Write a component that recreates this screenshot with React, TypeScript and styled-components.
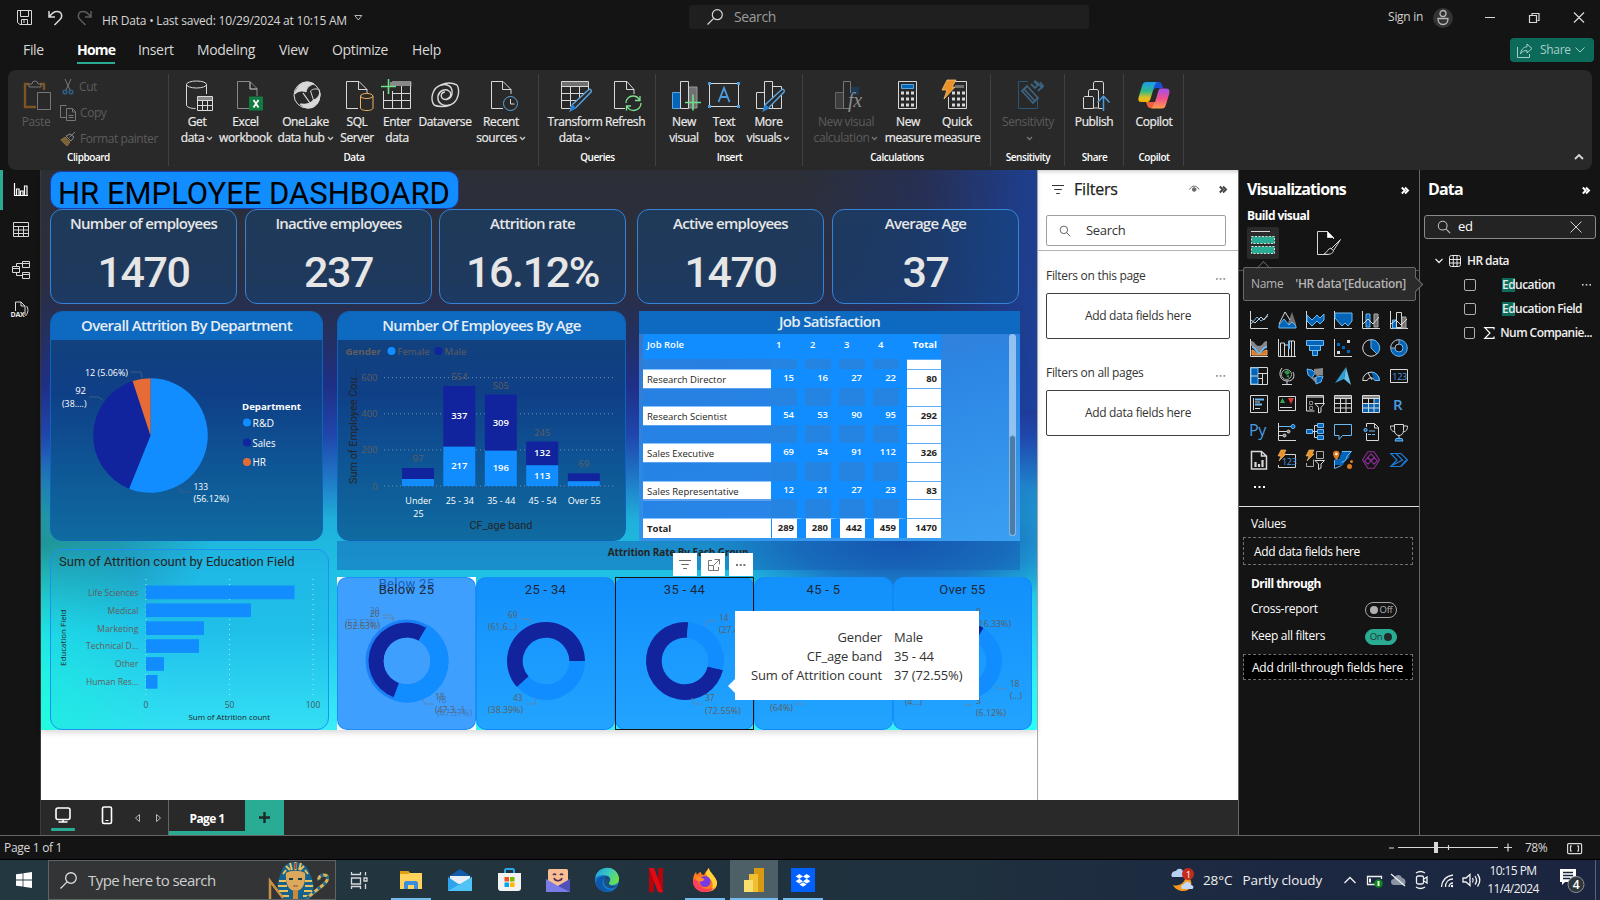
import React from 'react';
import styled, { createGlobalStyle, css } from 'styled-components';

const UI = `"Open Sans", "Noto Sans", sans-serif`;
const DIN = `Roboto, "Open Sans", sans-serif`;
const BLUE = '#118dff';
const NAVY = '#12239e';
const TEAL = '#2aab94';

const Global = createGlobalStyle`
  * { box-sizing: border-box; }
  body { margin: 0; background: #141414; font-family: ${UI}; }
  svg { display: block; overflow: visible; flex: none; }
`;

const Window = styled.div`
  width: 1600px;
  height: 900px;
  overflow: hidden;
  display: flex;
  flex-direction: column;
  background: #141414;
  color: #fff;
  font-size: 12px;
  letter-spacing: -0.3px;
  white-space: nowrap;
  line-height: 1.2;
`;

/* ---------- title bar ---------- */
const TitleBar = styled.header`
  height: 35px;
  display: grid;
  grid-template-columns: 689px 400px 1fr;
`;
const QuickBar = styled.div`
  display: flex;
  align-items: center;
  padding-left: 17px;
  color: #d6d6d6;
  letter-spacing: -0.21px;
`;
const FileName = styled.span`
  padding-top: 8px;
  margin: 0 7px 0 10px;
`;
const TopSearch = styled.div`
  height: 24px;
  margin-top: 5px;
  border-radius: 3px;
  background: #1f1f1f;
  display: flex;
  align-items: center;
  gap: 11px;
  padding-left: 18px;
  color: #9c9c9c;
  font-size: 14px;
  letter-spacing: -0.4px;
`;
const WindowControls = styled.div`
  display: flex;
  align-items: center;
  justify-content: flex-end;
  padding-right: 10px;
  color: #d0d0d0;
`;
const Avatar = styled.div`
  width: 20px;
  height: 20px;
  border-radius: 50%;
  background: #333;
  margin: 0 22px 0 10px;
`;

/* ---------- menu ---------- */
const Menu = styled.nav`
  height: 35px;
  display: flex;
  padding: 3px 6px 0 23px;
  align-items: flex-start;
`;
const MenuItem = styled.span<{ $w: number; $active?: boolean }>`
  width: ${p => p.$w}px;
  font-size: 14px;
  line-height: 24px;
  letter-spacing: ${p => (p.$active ? '-0.8px' : '-0.35px')};
  font-weight: ${p => (p.$active ? 700 : 400)};
  color: ${p => (p.$active ? '#fff' : '#d8d8d8')};
`;
const Underlined = styled.span`
  display: inline-block;
  width: 38px;
  height: 26px;
  border-bottom: 2px solid ${TEAL};
`;
const ShareButton = styled.div`
  margin-left: auto;
  width: 84px;
  height: 24px;
  border-radius: 4px;
  background: #0c6a5b;
  color: #a9cdc6;
  display: flex;
  align-items: center;
  gap: 7px;
  padding-left: 7px;
  & > span { width: 28px; }
`;

/* ---------- ribbon ---------- */
const Ribbon = styled.section`
  height: 100px;
  margin: 0 8px;
  border-radius: 8px;
  background: #292929;
  display: flex;
`;
const Group = styled.div<{ $w: number; $pad?: number }>`
  position: relative;
  width: ${p => p.$w}px;
  padding-left: ${p => p.$pad ?? 8}px;
  flex: none;
  display: flex;
  &::after {
    content: '';
    position: absolute;
    right: 0;
    top: 4px;
    height: 92px;
    width: 1px;
    background: #404040;
  }
`;
const GroupLabel = styled.span`
  position: absolute;
  left: 0;
  right: 0;
  bottom: 7px;
  text-align: center;
  font-size: 10px;
  font-weight: 600;
  letter-spacing: -0.45px;
`;
const ToolBox = styled.div<{ $w: number; $off?: boolean }>`
  width: ${p => p.$w}px;
  padding-top: 9px;
  display: flex;
  flex-direction: column;
  align-items: center;
  color: ${p => (p.$off ? '#5c5c5c' : '#ececec')};
  line-height: 16px;
  letter-spacing: -0.38px;
  -webkit-text-stroke: ${p => (p.$off ? '0' : '0.2px')};
  svg { margin-bottom: 3px; -webkit-text-stroke: 0; }
  svg.inl { display: inline-block; margin: 0 0 1px 2px; }
`;
const ClipList = styled.div`
  padding: 4px 0 0 2px;
  display: flex;
  flex-direction: column;
  color: #5c5c5c;
  letter-spacing: -0.42px;
`;
const ClipRow = styled.div`
  height: 26px;
  display: flex;
  align-items: center;
  gap: 3px;
`;
const CollapseSlot = styled.div`
  margin: auto 8px 10px auto;
`;

/* ---------- body ---------- */
const Body = styled.div`
  height: 665px;
  display: flex;
`;
const NavRail = styled.nav`
  width: 41px;
  border-right: 1px solid #3c3c3c;
  display: flex;
  flex-direction: column;
`;
const NavItem = styled.div<{ $active?: boolean }>`
  height: 40px;
  border-left: 3px solid ${p => (p.$active ? TEAL : 'transparent')};
  display: flex;
  align-items: center;
  padding-left: 9px;
`;
const Center = styled.main`
  width: 1198px;
  border-right: 1px solid #666;
  display: flex;
  flex-direction: column;
`;
const Stage = styled.div`
  height: 630px;
  display: flex;
  background: #fff;
`;
const Report = styled.div`
  width: 996px;
  height: 560px;
  padding: 1px 0 0 9px;
  box-shadow: 0 3px 6px rgba(0, 0, 0, 0.14);
  display: flex;
  flex-direction: column;
  letter-spacing: 0;
  background:
    radial-gradient(ellipse 190px 75px at 860px 372px, rgba(24, 70, 172, 0.95), rgba(24, 74, 176, 0.6) 55%, rgba(24, 80, 180, 0) 100%),
    radial-gradient(ellipse 130px 230px at 0 560px, rgba(28, 255, 220, 0.85), rgba(28, 240, 220, 0) 100%),
    radial-gradient(ellipse 170px 90px at 0 375px, rgba(32, 122, 130, 0.9), rgba(32, 130, 140, 0) 100%),
    radial-gradient(ellipse 160px 150px at 100% 100%, #28fff8, rgba(40, 245, 250, 0) 100%),
    linear-gradient(270deg, rgba(27, 66, 160, 0.85), rgba(32, 48, 120, 0.45) 110px, rgba(30, 40, 100, 0) 240px) 0 0 / 100% 240px no-repeat,
    linear-gradient(180deg, #2c2f36 0, #2b2e42 110px, #24305c 160px, #1f2f86 215px, #1f46ac 265px, #1f74c4 305px, #1fb0da 350px, #1fc0e4 400px, #20c8ea 460px, #38eef6 560px);
`;
const ReportTitle = styled.h1`
  margin: 0;
  width: 409px;
  height: 38px;
  padding-left: 7px;
  border: 1px solid #1d3fae;
  border-radius: 11px;
  background: ${BLUE};
  color: #000;
  font: 400 31px/43px ${DIN};
  letter-spacing: 0;
`;
const Kpis = styled.div`
  height: 95px;
  display: grid;
  grid-template-columns: repeat(5, 187px);
  column-gap: 8px;
  & > :nth-child(n + 3) { transform: translateX(-1px); }
  & > :nth-child(n + 4) { transform: translateX(2px); }
`;
const Kpi = styled.div`
  border: 1px solid #3583d6;
  border-radius: 12px;
  background: rgba(14, 74, 130, 0.42);
  color: #e6e6e6;
  text-align: center;
`;
const KpiName = styled.div`
  margin-top: 2px;
  font-size: 15px;
  line-height: 22px;
  font-weight: 600;
  letter-spacing: -0.72px;
`;
const KpiValue = styled.div`
  margin-top: 15px;
  font: 500 43px/46px ${DIN};
  letter-spacing: -1.4px;
`;
const Lower = styled.div`
  margin-top: 7px;
  display: flex;
`;
const LeftCol = styled.div`
  width: 287px;
`;
const RightCol = styled.div`
  width: 700px;
`;
const TopRow = styled.div`
  display: flex;
  gap: 13px;
`;
const Card = styled.div<{ $w: number }>`
  width: ${p => p.$w}px;
  height: 230px;
  flex: none;
  border: 1px solid #1064b8;
  border-radius: 12px;
  overflow: hidden;
  background: linear-gradient(180deg, #14427a 0, #0f3f86 35%, #0e5494 65%, #0f6ba0 100%);
`;
const CardHead = styled.div<{ $h?: number }>`
  height: ${p => p.$h ?? 28}px;
  line-height: ${p => (p.$h ? p.$h - 3 : 26)}px;
  background: #0e6ac0;
  color: #e4ecf4;
  text-align: center;
  font-size: 15px;
  font-weight: 600;
  letter-spacing: -0.66px;
`;
const EduCard = styled.div`
  width: 279px;
  height: 181px;
  margin-top: 8px;
  border: 1px solid #1e90f4;
  border-radius: 12px;
  background: rgba(30, 150, 235, 0.16);
`;
const EduTitle = styled.div`
  padding: 2px 0 0 8px;
  height: 22px;
  color: #252423;
  font: 400 13px/20px ${DIN};
  letter-spacing: 0;
`;

/* ---------- matrix ---------- */
const MatrixPanel = styled.div`
  width: 381px;
  height: 230px;
  background: linear-gradient(165deg, #3a76c4 0, #2c86e4 45%, #3aa0f2 100%);
`;
const MatrixBody = styled.div`
  display: flex;
  justify-content: space-between;
  padding: 0 4px 0 4px;
`;
const Matrix = styled.div`
  width: 298px;
  color: #fff;
  font-size: 9.5px;
`;
const MRow = styled.div<{ $h: number; $blank?: boolean; $head?: boolean }>`
  height: ${p => p.$h}px;
  display: grid;
  grid-template-columns: 128px repeat(4, 34px) 1fr;
  background: ${p => (p.$head ? BLUE : 'transparent')};
  line-height: ${p => (p.$head ? 21 : p.$h)}px;
  font-weight: ${p => (p.$head ? 600 : 400)};
`;
const RoleCell = styled.div<{ $kind: 'data' | 'blank' | 'head' }>`
  padding-left: 4px;
  ${p => p.$kind === 'data' && css`
    background: #fff;
    color: #252423;
    border-top: 1px solid #8cc6ff;
    line-height: 19px;
  `}
  ${p => p.$kind === 'blank' && css`background: rgba(36, 130, 230, 0.75);`}
`;
const NumCell = styled.div<{ $kind: 'data' | 'blank' | 'head' | 'total' }>`
  border-right: 8px solid ${BLUE};
  background: ${BLUE};
  text-align: right;
  padding-right: 3px;
  font-weight: 600;
  ${p => p.$kind === 'head' && css`text-align: left; padding-left: 5px;`}
  ${p => p.$kind === 'blank' && css`background: #2583e2;`}
  ${p => p.$kind === 'total' && css`background: #fff; color: #252423; font-weight: 700; border-left: 1px solid ${BLUE}; border-top: 1px solid #8cc6ff;`}
`;
const SumCell = styled.div<{ $head?: boolean }>`
  text-align: right;
  padding-right: 4px;
  font-weight: 700;
  ${p => !p.$head && css`background: #fff; color: #252423; border-top: 1px solid #5cabf8; line-height: 18px;`}
`;
const Scroll = styled.div`
  width: 7px;
  height: 202px;
  border-radius: 4px;
  background: #93c2f1;
  display: flex;
  align-items: flex-end;
`;
const ScrollThumb = styled.div`
  width: 7px;
  height: 101px;
  border-radius: 4px;
  border: 1px solid #8bb5dc;
  background: #4a7ea8;
`;

/* ---------- attrition by group ---------- */
const Banner = styled.div`
  width: 683px;
  height: 29px;
  background: rgba(20, 96, 180, 0.5);
  color: #252423;
  text-align: center;
  font-size: 10px;
  line-height: 23px;
  font-weight: 700;
  padding-right: 1px;
  letter-spacing: -0.1px;
`;
const Donuts = styled.div`
  margin-top: 7px;
  height: 153px;
  display: flex;
`;
const DonutFrame = styled.div<{ $selected?: boolean; $backed?: boolean }>`
  position: relative;
  width: 139px;
  height: 153px;
  ${p => p.$backed && css`background: #fff;`}
  ${p => p.$selected && css`outline: 1px solid #151515; outline-offset: -1px; z-index: 1;`}
`;
const DonutCard = styled.div<{ $fill?: string }>`
  width: 139px;
  height: 153px;
  border: 1px solid rgba(17, 132, 250, 0.7);
  border-radius: 10px;
  background: ${p => p.$fill ?? 'linear-gradient(180deg, #1290fc, #22a4ff)'};
`;
const DonutTitle = styled.div`
  position: relative;
  color: #1d2a3a;
  text-align: center;
  font: 400 13px/23px ${DIN};
  letter-spacing: 0.3px;
`;
const GhostTitle = styled(DonutTitle)`
  position: absolute;
  left: 0;
  right: 0;
  top: -5px;
  color: #1a60b4;
`;
const VisualTools = styled.div`
  position: absolute;
  left: 58px;
  top: -24px;
  display: flex;
  gap: 4px;
`;
const VisualTool = styled.div`
  width: 24px;
  height: 23px;
  background: #fff;
  display: grid;
  place-items: center;
`;
const Tip = styled.div`
  position: absolute;
  left: 120px;
  top: 34px;
  width: 244px;
  height: 89px;
  padding: 17px 0 0 10px;
  background: #fff;
  color: #333;
  font-size: 13px;
  line-height: 19px;
  letter-spacing: -0.13px;
  display: grid;
  grid-template-columns: 137px 1fr;
  grid-auto-rows: 19px;
  column-gap: 12px;
  & > :nth-child(odd) { text-align: right; }
  &::before {
    content: '';
    position: absolute;
    left: -7px;
    top: 68px;
    border: 7px solid transparent;
    border-left: 0;
    border-right-color: #fff;
  }
`;

/* ---------- page tabs ---------- */
const TabBar = styled.div`
  height: 35px;
  background: #292929;
  display: flex;
`;
const DeviceBar = styled.div`
  width: 128px;
  border-right: 1px solid #666;
  display: flex;
  padding-left: 10px;
`;
const PageTab = styled.div`
  width: 76px;
  border-bottom: 4px solid ${TEAL};
  text-align: center;
  line-height: 37px;
  font-weight: 700;
  letter-spacing: -0.6px;
`;
const AddTab = styled.div`
  width: 39px;
  background: ${TEAL};
  display: grid;
  place-items: center;
`;

/* ---------- filters pane ---------- */
const Filters = styled.aside`
  width: 201px;
  border-left: 1px solid #a6a6a6;
  color: #333;
  padding-left: 8px;
  height: 630px;
  box-shadow: inset 0 4px 4px -3px rgba(0, 0, 0, 0.25);
`;
const FiltersHead = styled.div`
  height: 45px;
  display: flex;
  align-items: center;
  padding: 0 11px 6px 6px;
  font-size: 16px;
  letter-spacing: -0.2px;
  color: #252423;
  -webkit-text-stroke: 0.25px;
  & > span { margin: 0 auto 0 10px; }
`;
const FilterSearch = styled.div`
  width: 180px;
  height: 31px;
  border: 1px solid #a0a0a0;
  border-radius: 2px;
  display: flex;
  align-items: center;
  gap: 15px;
  padding-left: 12px;
  font-size: 13px;
`;
const Rule = styled.div`
  height: 1px;
  margin: 4px 0 0 -8px;
  background: #b4b4b4;
`;
const FilterLabel = styled.div`
  height: 16px;
  margin-top: 17px;
  display: flex;
  justify-content: space-between;
  padding-right: 12px;
  align-items: center;
  & > svg { margin-top: 5px; }
`;
const DropBox = styled.div`
  width: 184px;
  height: 46px;
  margin: 9px 0 26px;
  border: 1px solid #404040;
  border-radius: 2px;
  display: grid;
  place-items: center;
`;

/* ---------- visualizations pane ---------- */
const Viz = styled.aside`
  width: 181px;
  border-right: 1px solid #666;
  position: relative;
`;
const PaneHead = styled.div<{ $l: number; $r: number }>`
  height: 38px;
  display: flex;
  align-items: center;
  justify-content: space-between;
  padding: 2px ${p => p.$r}px 0 ${p => p.$l}px;
  font-size: 16px;
  font-weight: 700;
  letter-spacing: -0.85px;
`;
const Strong = styled.div`
  font-weight: 700;
  letter-spacing: -0.58px;
  padding-left: 8px;
  height: 19px;
  line-height: 16px;
`;
const BuildTabs = styled.div`
  display: flex;
  gap: 33px;
  padding-left: 8px;
  height: 44px;
  border-bottom: 1px solid #555;
`;
const BuildTab = styled.div<{ $on?: boolean }>`
  width: 32px;
  height: 32px;
  border-radius: 2px;
  background: ${p => (p.$on ? '#2a2a2a' : 'transparent')};
  display: grid;
  place-items: center;
`;
const VizGrid = styled.div`
  padding: 40px 0 0 11px;
  display: grid;
  grid-template-columns: repeat(6, 28px);
  grid-auto-rows: 28px;
  height: 235px;
`;
const NameTip = styled.div`
  position: absolute;
  left: 4px;
  top: 97px;
  width: 173px;
  height: 34px;
  border: 1px solid #6a6a6a;
  border-radius: 2px;
  background: #2b2b2b;
  color: #b4b4b4;
  display: flex;
  align-items: center;
  gap: 12px;
  padding: 1px 0 0 7px;
  z-index: 2;
  & > b { font-weight: 600; letter-spacing: -0.34px; }
  &::before,
  &::after {
    content: '';
    position: absolute;
    width: 10px;
    height: 10px;
    transform: rotate(45deg);
  }
  &::before {
    left: 14px;
    top: -5px;
    border-top: 1px solid #6a6a6a;
    border-left: 1px solid #6a6a6a;
    clip-path: polygon(0 0, 100% 0, 0 100%);
  }
  &::after {
    right: -6px;
    top: 11px;
    border-top: 1px solid #6a6a6a;
    border-right: 1px solid #6a6a6a;
    background: #2b2b2b;
  }
`;
const Wells = styled.div`
  border-top: 1px solid #e0e0e0;
  padding: 9px 5px 0 4px;
`;
const WellLabel = styled.div<{ $b?: boolean }>`
  padding: 0 0 ${p => (p.$b ? 4 : 0)}px 8px;
  line-height: 16px;
  font-weight: ${p => (p.$b ? 700 : 400)};
  letter-spacing: ${p => (p.$b ? '-0.55px' : '-0.3px')};
`;
const Well = styled.div<{ $h: number; $dark?: boolean }>`
  width: 170px;
  height: ${p => p.$h}px;
  margin: ${p => (p.$dark ? '4px 0 0' : '5px 0 11px')};
  padding-left: ${p => (p.$dark ? 8 : 10)}px;
  line-height: ${p => p.$h - 1}px;
  border: 1px dashed #707070;
  background: ${p => (p.$dark ? '#000' : 'transparent')};
  letter-spacing: ${p => (p.$dark ? '-0.22px' : '-0.31px')};
`;
const ToggleRow = styled.div`
  height: 27px;
  display: flex;
  align-items: center;
  justify-content: space-between;
  padding: 0 17px 0 8px;
`;
const Toggle = styled.div<{ $on?: boolean }>`
  width: 32px;
  height: 16px;
  border-radius: 8px;
  border: 1px solid ${p => (p.$on ? TEAL : '#a8a8a8')};
  background: ${p => (p.$on ? TEAL : 'transparent')};
  color: ${p => (p.$on ? '#1d3a34' : '#b0b0b0')};
  display: flex;
  flex-direction: ${p => (p.$on ? 'row' : 'row-reverse')};
  align-items: center;
  justify-content: center;
  gap: 2px;
  font-size: 9.5px;
  &::after {
    content: '';
    width: 8px;
    height: 8px;
    border-radius: 50%;
    background: ${p => (p.$on ? '#1f2b29' : '#b0b0b0')};
  }
`;

/* ---------- data pane ---------- */
const DataPane = styled.aside`
  width: 180px;
`;
const DataSearch = styled.div`
  margin: 7px 4px 10px 4px;
  height: 24px;
  border: 1px solid #8a8a8a;
  border-radius: 3px;
  background: #232323;
  display: flex;
  align-items: center;
  padding: 0 13px 0 12px;
  font-size: 13px;
  & > span { margin: 0 auto 0 7px; }
`;
const TreeRow = styled.div<{ $pad: number }>`
  height: 24px;
  display: flex;
  align-items: center;
  padding: 0 8px 0 ${p => p.$pad}px;
  font-weight: 600;
  color: #f0f0f0;
  letter-spacing: -0.56px;
`;
const Check = styled.i`
  width: 12px;
  height: 12px;
  border: 1px solid #b0b0b0;
  border-radius: 2px;
`;
const SigmaSlot = styled.i`
  width: 26px;
  padding-left: 9px;
`;
const Hit = styled.mark`
  background: #0f6b5a;
  color: #dfeeea;
`;
const RowMore = styled.span`
  margin-left: auto;
`;

/* ---------- status + taskbar ---------- */
const StatusBar = styled.footer`
  height: 25px;
  border-top: 1px solid #666;
  border-bottom: 1px solid #000;
  display: flex;
  align-items: center;
  justify-content: space-between;
  padding: 2px 18px 0 4px;
  color: #d8d8d8;
`;
const ZoomBox = styled.div`
  display: flex;
  align-items: center;
  & > span { margin: 0 18px 0 15px; width: 24px; letter-spacing: -0.5px; }
`;
const Taskbar = styled.footer`
  height: 40px;
  background: linear-gradient(90deg, #22373f 0, #22353f 30%, #1f303e 60%, #1c2842 80%, #1b2540 100%);
  display: flex;
`;
const StartButton = styled.div`
  width: 48px;
  display: grid;
  place-items: center;
`;
const TaskSearch = styled.div`
  width: 288px;
  margin-right: 1px;
  background: #323435;
  border: 1px solid #5c6468;
  display: flex;
  align-items: center;
  gap: 11px;
  padding-left: 11px;
  color: #cfcfcf;
  font-size: 15px;
  letter-spacing: -0.55px;
  & > span { width: 170px; }
`;
const TaskItem = styled.div<{ $run?: boolean; $active?: boolean }>`
  width: 48px;
  margin-left: 1px;
  height: 40px;
  position: relative;
  display: grid;
  place-items: center;
  background: ${p => (p.$active ? '#4d6068' : 'transparent')};
  ${p => p.$run && css`
    &::after {
      content: '';
      position: absolute;
      bottom: 0;
      left: ${p.$active ? 0 : 4}px;
      right: ${p.$active ? 0 : 4}px;
      height: 2px;
      background: #76b9ed;
    }
  `}
`;
const Tray = styled.div`
  margin-left: auto;
  display: flex;
  align-items: center;
  color: #f0f0f0;
`;
const Weather = styled.div`
  display: flex;
  align-items: center;
  gap: 9px;
  width: 174px;
  font-size: 13.5px;
  letter-spacing: -0.1px;
`;
const Clock = styled.div`
  width: 66px;
  text-align: center;
  line-height: 18px;
  letter-spacing: -0.6px;
`;
const TrayEnd = styled.div`
  height: 40px;
  width: 46px;
  margin: 0 4px;
  border-right: 1px solid #5a6478;
  display: flex;
  align-items: center;
  padding-left: 10px;
`;

/* ---------- icons ---------- */
const W = '#d8d8d8';
const Ico: React.FC<{ children: React.ReactNode; w?: number; h?: number; c?: string; vb?: string; s?: number; className?: string }> = ({ children, w = 32, h = 32, c = W, vb, s = 1, className }) => (
  <svg className={className} width={w} height={h} viewBox={vb ?? `0 0 ${w} ${h}`} fill="none" stroke={c} strokeWidth={s}>{children}</svg>
);
const Caret = ({ c = '#c0c0c0' }) => <Ico className="inl" w={7} h={5} c={c} s={1.3}><path d="M1 1l2.5 2.5L6 1" /></Ico>;
const Chevrons = ({ c = '#fff' }) => <Ico w={8} h={7} c={c} s={1.9}><path d="M.8.500L3.800 3.500.8 6.500M4 .5L7 3.500 4 6.500" /></Ico>;
const Dots = ({ c = '#fff', r = 1 }) => (
  <Ico w={10} h={4} c="none"><g fill={c}><rect x="0" y="1" width={2 * r} height={2 * r} /><rect x="3.7" y="1" width={2 * r} height={2 * r} /><rect x="7.4" y="1" width={2 * r} height={2 * r} /></g></Ico>
);
const Lens = ({ s = 16, c = W, flip = false }) => (
  <Ico w={s} h={s} vb="0 0 16 16" c={c} s={1.2}>{flip ? <><circle cx="6.5" cy="6.5" r="5" /><path d="M10.2 10.2L15 15" /></> : <><circle cx="10.3" cy="5.7" r="5" /><path d="M6.7 9.3L.5 15.5" /></>}</Ico>
);
const Funnel = ({ s = 12, c = '#333' }) => <Ico w={s} h={s} vb="0 0 12 12" c={c} s={1.1}><path d="M0 1.5h12M2.2 5.5h7.6M4.2 9.5h3.6" /></Ico>;
const Pen = () => <><path d="M27 13l3-2.500c1.500-.8 3 1 2 2.500L17 28.500l-5.500 3 2-6z" fill="#292929" stroke="#5ba6e0" strokeWidth="1.400" /><path d="M13.500 26l3.500 3-5.500 2.500z" fill="#1f7fd6" stroke="#1f7fd6" /></>;

const toolIcons: Record<string, React.ReactNode> = {
  paste: <><path d="M9 5H5v23h11M20 5h4v6" stroke="#7d5522" strokeWidth="2.4" /><path d="M9 8V5h3a3 3 0 016 0h3v3z" stroke="#777" /><path d="M17.500 13.500h13v17h-13z" stroke="#777" fill="#292929" /></>,
  get: <><ellipse cx="15.500" cy="5.500" rx="10" ry="3.500" /><path d="M5.500 5.500V26c0 2 4 3.500 9 3.500M25.500 5.500V15" /><path d="M16.500 17.500h15v14h-15z" fill="#292929" /><path d="M17 18h14v3H17z" fill="#888" stroke="none" /><path d="M16.500 21.500h15M16.500 26.500h15M21.500 21.500v10M26.500 21.500v10" /></>,
  excel: <><path d="M22 29.500H7.500V2.500H20L27 9.500V17" stroke="#888" /><path d="M20 3v7h7" stroke={W} /><rect x="19" y="17.500" width="14" height="14" fill="#107c41" stroke="none" /><path d="M23.500 21l5 7.500M28.500 21l-5 7.500" stroke="#fff" strokeWidth="1.8" /></>,
  onelake: <><circle cx="17" cy="16" r="13" /><path d="M7 10C10 3 18 1 24 5c-4 1-7 3-8 8-4-2-8-1-11 2 0-2 1-4 2-5z" fill={W} /><path d="M29.500 11c-3-2-7-1-9 1l3 9c-3 4-8 5-13 4 3 4 9 5 13 3 6-3 7-10 6-17z" /><path d="M23.500 21c3-1 5-3 6.500-7 0 8-4 13-9 14.500-4 1-8 0-10.500-3.500 5 1 10 0 13-4z" fill={W} /><path d="M13 14l7 10" stroke={W} strokeWidth="1.300" /></>,
  sql: <><path d="M17 29.500H5.500V2.500H18l8 8V14M17.500 3v7.500H26" /><path d="M19.500 17v12c0 1.500 3 2.500 6.500 2.500s6-1 6-2.500V17" stroke="#f0b060" fill="#292929" /><ellipse cx="25.700" cy="17" rx="6.200" ry="2.500" stroke="#f0b060" fill="#292929" /></>,
  enter: <><path d="M9 3h21v4H9z" fill="#888" stroke="none" /><path d="M2.500 12v17.500h27V3M2.500 21.500h27M11.500 12v17.500M20.500 7v22.500M12 14.500h17.500" /><path d="M11 2.500h19v5" stroke="#888" /><path d="M0 7.500h15M7.500 0v15" stroke="#6ee08a" strokeWidth="1.600" /></>,
  dataverse: <><path d="M5 26C1 20 3 9 12 6c7-2 12 2 11 9-1 5-7 7-10 4-2-3 0-6 3-6" strokeWidth="1.400" /><path d="M28 6c3 5 2 17-7 20-7 2-13-2-12-9 1-5 7-8 11-5 3 2 2 7-2 8" strokeWidth="1.400" /><path d="M12 6c6-3 12-2 16 0M5 26c4 2 11 2 16 0" strokeWidth="1.400" /></>,
  recent: <><path d="M18 29.500H6.500V2.500H18l8 8V15M17.500 3v7.500H26" /><circle cx="25.500" cy="24.500" r="7" stroke="#5ba6e0" fill="#292929" /><path d="M25.500 20v5h4" /></>,
  transform: <><path d="M3 3h26v4H3z" fill="#707070" stroke="none" /><path d="M2.500 2.500h27v10M2.500 2.500v27h9M2.500 7.500h27M2.500 14.500h24M2.500 21.500h17M11.500 7.500v20M20.500 7.500v12" /><Pen /></>,
  refresh: <><path d="M16 29.500H5.500V2.500H18l7 8V15M17.500 3v7.500H25" /><path d="M17 24c0-4 3-7 7-7 3 0 5 1 6.500 4M31 17v4.500h-5M32 24c0 4-3 7.500-7.500 7.500-3 0-5-1.500-6.500-4M17.500 31.500V27H22" stroke="#7fe08f" strokeWidth="1.300" /></>,
  newvis: <><path d="M20 8h9v21h-9z" fill="#707070" stroke="#999" /><path d="M4.500 13.500h8v16h-8z" fill="#0364b8" stroke="#5ba6e0" /><path d="M12.500 2.500h8v27h-8z" fill="#292929" /><path d="M17 23.500h16M25 15.500v16" stroke="#6ee08a" strokeWidth="1.600" /></>,
  textbox: <><path d="M1.500 4.500h29v23h-29z" /><path d="M0 3h3v3H0zM29 3h3v3h-3zM0 26h3v3H0zM29 26h3v3h-3z" fill="#4a9ce0" stroke="none" /><path d="M10.500 23L16 9l5.500 14M12.500 18h7" stroke="#4a9ce0" strokeWidth="1.800" /></>,
  more: <><path d="M3.500 13.500h8v16h-8zM19.500 7.500h9v22h-9z" /><path d="M11.500 2.500h8v27h-8z" fill="#292929" /><g transform="translate(-1 0)"><Pen /></g></>,
  newcalc: <><path d="M20 8h9v8h-9z" fill="#1c3a56" stroke="none" /><path d="M5.500 13.500h8v16h-8z" fill="#3c3c3c" stroke="#666" /><path d="M20.500 14V2.500h-7v27h7" stroke="#777" /><text x="18" y="28" fill="#8c8c8c" stroke="none" fontFamily="Liberation Serif, serif" fontStyle="italic" fontSize="20">fx</text></>,
  newmeasure: <><path d="M6.500 2.500h18v27h-18z" /><path d="M9.500 5.500h12v4h-12z" fill="#0364b8" stroke="#5ba6e0" /><path d="M9 14h13M9 20h13M9 26h13" strokeWidth="3" strokeDasharray="3 2" /></>,
  quick: <><path d="M14 2.500h11.500v27H7.500V18" /><path d="M14 6h9v3h-9z" fill="#707070" stroke="none" /><path d="M11 14h13M11 20h13M11 26h13" strokeWidth="3" strokeDasharray="3 2" /><path d="M6 1h9l-4 7h3L3 20l3-9H1z" fill="#e8922a" stroke="#f8c070" strokeWidth=".8" /></>,
  sens: <><path d="M16 2.500H6.500v27h19V18" stroke="#2c5674" /><path d="M10 12l11 12 5-5L15 7zM12 10l11 12M19 5l4 4 3-3-4-4M23 2l8 7M26 12l5-5-3-4" stroke="#3c6380" strokeWidth="1.800" /></>,
  publish: <><path d="M15.500 29.500h-10v-11l1-1h8l1 1zM10.500 17v-5l1-1.500h8l1 1.500v17h-5M15.500 10V4l1-1.500h8l1 1.500v11M20.500 29.500h4" /><path d="M25.500 32V17.500M19.500 23.500l6-6.500 6 6.500" stroke="#4a9ce0" strokeWidth="1.500" /></>,
};
const Copilot = () => (
  <Ico c="none">
    <defs>
      <linearGradient id="ca" x1="0" y1="0" x2="0" y2="1"><stop offset="0" stopColor="#1a9bf0" /><stop offset=".45" stopColor="#2fb88a" /><stop offset=".8" stopColor="#e8c020" /><stop offset="1" stopColor="#f0b000" /></linearGradient>
      <linearGradient id="cb" x1="0" y1="0" x2="0" y2="1"><stop offset="0" stopColor="#a050f0" /><stop offset=".5" stopColor="#f0508c" /><stop offset="1" stopColor="#ffa04a" /></linearGradient>
    </defs>
    <path d="M15 3h6c2 0 3 2 4 6h-6c-3 0-4 2-5 5z" fill="#1a50d8" />
    <path d="M16 29h-4c-2 0-3-3-4-6h6l4-6z" fill="#f0603a" />
    <path d="M8 3h12c-2 0-3 2-4 5l-3 10c-1 4-2 5-4 5H3c-3 0-3-3-2-6L4 7c1-3 2-4 4-4z" fill="url(#ca)" />
    <path d="M24 29.500H12c2 0 3-2 4-5l3-10c1-4 2-5 4-5h5c4 0 4 3 3 6l-3 10c-1 3-2 4-4 4z" fill="url(#cb)" />
    <path d="M17 10h4l-4 13h-4z" fill="#292929" />
  </Ico>
);

const Tool: React.FC<{ w: number; icon: string; a: string; b?: string; drop?: boolean; off?: boolean }> = ({ w, icon, a, b, drop, off }) => (
  <ToolBox $w={w} $off={off}>
    {icon === 'copilot' ? <Copilot /> : <Ico>{toolIcons[icon]}</Ico>}
    <span>{a}</span>
    <span>{b}{drop && <Caret c={off ? '#777' : '#c8c8c8'} />}</span>
  </ToolBox>
);

/* 18px glyphs of the visual gallery */
const ax = <path d="M.5 0v17.500H18" />;
const LB = '#6cb8f0';
const DB = '#0364b8';
const gallery: React.ReactNode[] = [
  <>{ax}<path d="M1 13l6-7 4 4 7-5" stroke={LB} /><path d="M1 9l4 3 6-6 3 3 4-6" /></>,
  <><path d="M8 17L14 1l4 12v4z" fill="#707070" stroke="none" /><path d="M1 13L7 1l5 8" /><path d="M1 17v-3l5-6 5 6 3-3 4 4v2z" fill={DB} stroke={LB} /></>,
  <>{ax}<path d="M1 4l5 5 5-5 3 3 4-4v6l-4 4-3-3-5 5-5-5z" fill={DB} stroke={LB} /></>,
  <>{ax}<path d="M1 2h17v8l-4 5-3-3-3 3-7-8z" fill={DB} stroke={LB} /></>,
  <>{ax}<path d="M4 3h4v13H4z" fill={DB} stroke={LB} /><path d="M12 3h4v13h-4z" fill="#707070" stroke="#aaa" /><path d="M1 13l5-5 5 5 6-7" /></>,
  <>{ax}<path d="M2.500 9h4v8h-4z" fill={DB} stroke={LB} /><path d="M6.500 1.500h5v15h-5z" /><path d="M12 6h4v11h-4z" fill="#707070" stroke="#aaa" /><path d="M1 13l5-4 5 5 6-6" /></>,
  <>{ax}<path d="M1 2c4 0 4 5 8 5s4-5 8-5v6c-4 0-5 5-8 5s-4-6-8-6z" fill="#888" stroke="none" /><path d="M2 16V11c3 0 4 4 7 4s4-4 8-4v5z" fill="#d9772a" stroke="#f0a050" /><path d="M2 8c4 0 4 6 7 6s3-6 8-6" stroke={LB} strokeWidth="1.800" /></>,
  <>{ax}<path d="M2.500 17V4h4v13M6.500 6h4v11M10.500 10V2h3v8M13.500 17V2h3v15" /><path d="M11 2v8" stroke={LB} strokeWidth="2" /></>,
  <><path d="M.5 1.500h17v5H.5zM3.500 6.500h11v5h-11zM6.500 11.500h5v5h-5z" fill={DB} stroke={LB} /></>,
  <>{ax}<g stroke="none" fill={DB}><path d="M3 4h3v3H3zM8 7h3v3H8zM13 11h3v3h-3z" /><path fill={W} d="M13 1h3v3h-3zM3 12h3v3H3z" /></g></>,
  <><circle cx="9" cy="9" r="8.300" /><path d="M9 .7V9l6 6A8.300 8.300 0 009 .7z" fill={DB} stroke={LB} /></>,
  <><circle cx="9" cy="9" r="6.200" stroke={DB} strokeWidth="4" /><circle cx="9" cy="9" r="8.300" stroke={LB} /><circle cx="9" cy="9" r="4" stroke={LB} /><path d="M9 .7V5a4 4 0 00-4 4H.7A8.300 8.300 0 019 .7z" fill="#141414" stroke="#aaa" /></>,
  <><path d="M.5.500h17v17H.5z" /><path d="M1 1h7v16H1z" fill={DB} stroke={LB} /><path d="M8 6.500h9.500M12.500 6.500v11M8 11.500h4.500M1 9h7" /></>,
  <><circle cx="8.500" cy="7.500" r="5" stroke="#aaa" /><path d="M6 5l4-2 2 3-3 2zM8 9l3-1v3z" fill="#2d9a4a" stroke="none" /><path d="M4 1C0 6 2 14 9 14s8-5 6-9M9 14v3M4 17.500h10" /></>,
  <><path d="M1 2l5 1 3 3-3 5-4-3z" fill={DB} stroke={LB} /><path d="M8 2l9-1v7l-6 1-3-3zM5 11l5-1v6z" fill="#888" stroke="none" /><path d="M10 10l7-1-2 6-5 2z" fill={DB} stroke={LB} /></>,
  <><path d="M12 0L1 16l9-4z" fill="#2f9bd0" stroke="none" /><path d="M12 0l-2 12 7 6z" fill="#66c3ec" stroke="none" /></>,
  <><path d="M.7 13.500a8.300 8.300 0 0116.600 0h-4.500a4 4 0 00-7.600 0z" /><path d="M9 5a8.300 8.300 0 018.300 8.500h-4.500" fill={DB} stroke={LB} /><path d="M6 6l4 7" /></>,
  <><path d="M.5 2.500h17v13H.5z" /><text x="2.300" y="12.800" fontSize="9" fill="#4a9ce0" stroke="none" fontFamily="Open Sans">123</text></>,
  <><path d="M.5.500h17v17H.5z" /><path d="M3.500 3v12" /><path d="M5 4.500h9M5 9.500h7" stroke={LB} strokeWidth="2" /><path d="M5 7h5M5 13.500h5" /></>,
  <><path d="M.5 1.500h17v14H.5z" /><path d="M2 8l2.500-5L7 8z" fill="#3aa655" stroke="none" /><path d="M10 3h6l-3 6z" fill="#e03a3a" stroke="none" /><path d="M2 12.500h12" /></>,
  <><path d="M.5 16V.500h17V8M.5 16h8" /><path d="M1 1h16v2H1z" fill="#888" stroke="none" /><path d="M3.500 6.500h3v3h-3zM3.500 11.500h3v3h-3z" stroke="#888" /><path d="M9 8.500h9.500L15 12.500V17l-2.500 1v-5.500z" fill="#141414" /></>,
  <><path d="M1 1h16v2H1z" fill="#888" stroke="none" /><path d="M.5.500h17v17H.5zM.5 3.500h17M.5 8.500h17M.5 13h17M6.500 3v14M12 3v14" /></>,
  <><path d="M12 4h5v13H1V9h11z" fill={DB} stroke="none" /><path d="M1 1h16v2H1z" fill="#888" stroke="none" /><path d="M.5.500h17v17H.5zM.5 3.500h17M.5 8.500h17M.5 13h17M6.500 3v14M12 3v14" /></>,
  <text x="3" y="14.500" fontSize="15" fontWeight="600" fill="#4a9ce0" stroke="none" fontFamily="Open Sans">R</text>,
  <text x="-1" y="13" fontSize="16" fontWeight="500" fill="#4a9ce0" stroke="none" fontFamily="Open Sans">Py</text>,
  <>{ax}<path d="M1 3.500h12" stroke={LB} /><circle cx="15" cy="3.500" r="2" fill={DB} stroke={LB} /><path d="M1 8.500h8M1 12.500h4" /><circle cx="10.500" cy="8.500" r="1.500" fill="#888" /><circle cx="6.500" cy="12.500" r="1.500" fill="#888" /></>,
  <><path d="M6 8.500h5M8.500 2.500v12M8.500 2.500H11M8.500 14.500H11" /><path d="M.5 6.500h6v4h-6zM11.500.500h6v4h-6zM11.500 6.500h6v4h-6zM11.500 12.500h6v4h-6z" fill={DB} stroke={LB} /></>,
  <path d="M.5 1.500h17v11H8.500L5 16.500v-4H.5z" stroke={LB} />,
  <><path d="M4.500 4V.500h8l4 4v13h-12V10M12.500 1v4h4" /><circle cx="3.500" cy="7" r="1.600" fill={DB} stroke={LB} /><path d="M7 8h6M6 11.500h3M10 11.500h3" stroke={LB} /></>,
  <><path d="M4.500 1.500h9v6c0 3-2 5-4.500 5s-4.500-2-4.500-5zM4.500 3H.5c0 4 1 5 4.500 6M13.500 3h4c0 4-1 5-4.500 6M9 12.500V15" /><path d="M6 15.500h6l1 2.500H5z" fill={DB} stroke={LB} /></>,
  <><path d="M1.500.500h10l5 4.500v13h-15zM11.500.500V5h5" strokeWidth="1.500" /><path d="M5.500 16v-5M9 16V13M12.500 16V9" strokeWidth="2.200" /></>,
  <><path d="M.5 14v2.500h17v-13H8" /><text x="4" y="14" fontSize="9" fill="#4a9ce0" stroke="none" fontFamily="Open Sans">123</text><path d="M3-1h5L6 3h2L1 10l2-5H0z" fill="#e8922a" stroke="#f8c070" strokeWidth=".6" /></>,
  <><path d="M10.500.500h7v7h-7zM.5 12v3.500h7v-7" stroke="#aaa" /><path d="M9 9.500h9.500L15 13v4l-2.500 1.500V13z" fill="#141414" /><path d="M3-1h5L6 3h2L1 10l2-5H0z" fill="#e8922a" stroke="#f8c070" strokeWidth=".6" /></>,
  <><path d="M8 0h9l-2 7-4 3-2 4H1V8h4z" fill={DB} stroke="none" /><path d="M8 .5h9.500l-4 4-2 5-4 2M.5 9v8.500l7-3" stroke={LB} /><path d="M-1 3a3.200 3.200 0 016.500 0C5.500 5 3 9 2.500 9S-1 5-1 3z" fill="#e07a1f" stroke="none" /><circle cx="2.300" cy="3" r="1.200" fill="#fff" stroke="none" /><circle cx="15.500" cy="15.500" r="2.500" fill="#e07a1f" stroke="none" /><circle cx="17.500" cy="10.500" r="1.500" fill="#e07a1f" stroke="none" /></>,
  <g stroke="#8c2f96" strokeWidth="1.100"><path d="M6 .8h6l5.500 8.200-5.500 8.200H6L.5 9z" /><path d="M9 3l3.300 3.200L9 9.400 5.700 6.200zM12.300 6.800l3 3-3.300 3.400-3-3.300zM5.700 6.800l3.300 3.100-3 3.300-3.300-3.300z" /></g>,
  <g stroke="#1f7ad6" strokeWidth="1.200"><path d="M.7 2.500H11L17.500 9 11 15.500H.7L7 9zM6 2.500L12.500 9 1 15M11 15L16 9.500" /></g>,
];

/* ---------- charts ---------- */
type TProps = { x: number; y: number; children: string; fill?: string; s?: number; w?: number; a?: 'start' | 'middle' | 'end'; b?: number; din?: boolean; rot?: boolean };
const T: React.FC<TProps> = ({ x, y, children, fill = '#fff', s = 9.5, w, a = 'start', b = 400, din, rot }) => (
  <text x={x} y={y} fill={fill} fontSize={s} textAnchor={a} fontWeight={b} fontFamily={din ? 'Roboto' : 'Open Sans'}
    textLength={w} lengthAdjust="spacingAndGlyphs" transform={rot ? `rotate(-90 ${x} ${y})` : undefined}>{children}</text>
);
const GREY = '#605e5c';
const pt = (cx: number, cy: number, r: number, deg: number) => {
  const t = ((deg - 90) * Math.PI) / 180;
  return `${(cx + r * Math.cos(t)).toFixed(2)} ${(cy + r * Math.sin(t)).toFixed(2)}`;
};
const slice = (cx: number, cy: number, r: number, a: number, b: number) =>
  `M${cx} ${cy}L${pt(cx, cy, r, a)}A${r} ${r} 0 ${b - a > 180 ? 1 : 0} 1 ${pt(cx, cy, r, b)}Z`;
const ring = (cx: number, cy: number, R: number, r: number, a: number, b: number) => {
  const l = b - a > 180 ? 1 : 0;
  return `M${pt(cx, cy, R, a)}A${R} ${R} 0 ${l} 1 ${pt(cx, cy, R, b)}L${pt(cx, cy, r, b)}A${r} ${r} 0 ${l} 0 ${pt(cx, cy, r, a)}Z`;
};

/* origin of each drawing is the page position of its card body */
const DepartmentPie = () => (
  <svg width={271} height={200} viewBox="51 340 271 200">
    <path d={slice(150.5, 435.500, 57.300, 0, 202)} fill={BLUE} />
    <path d={slice(150.5, 435.500, 57.300, 202, 341.800)} fill={NAVY} />
    <path d={slice(150.5, 435.500, 57.300, 341.800, 360)} fill="#e66c37" />
    <path d="M131 372h10l1 6M89 397h9l5 3M177 486l4 6h10" fill="none" stroke="#3c5d84" />
    <T x={85} y={376} w={43}>12 (5.06%)</T>
    <T x={86} y={394} a="end">92</T>
    <T x={62} y={407} w={24.500}>(38....)</T>
    <T x={193.500} y={490} w={14.500}>133</T>
    <T x={193.500} y={502} w={35.500}>(56.12%)</T>
    <T x={242} y={410} b={700} w={59}>Department</T>
    <circle cx="247" cy="422.500" r="4" fill={BLUE} /><T x={252.500} y={427} w={21.500} s={10}>R&amp;D</T>
    <circle cx="247" cy="442.500" r="4" fill={NAVY} /><T x={252.500} y={446.500} w={23} s={10}>Sales</T>
    <circle cx="247" cy="462" r="4" fill="#e66c37" /><T x={252.500} y={466} w={13.500} s={10}>HR</T>
  </svg>
);

const ages: [string, number, number, number, string, string, string][] = [
  ['Under', 402, 468, 479, '', '', '97'],
  ['25 - 34', 443.300, 386, 446.700, '337', '217', '554'],
  ['35 - 44', 484.800, 394.500, 450.700, '309', '196', '505'],
  ['45 - 54', 526.200, 441.500, 465.300, '132', '113', '245'],
  ['Over 55', 567.800, 473.300, 481.300, '', '', '69'],
];
const AgeChart = () => (
  <svg width={287} height={200} viewBox="338 340 287 200">
    <T x={345.500} y={355} b={700} fill={GREY} w={35.500}>Gender</T>
    <circle cx="391.500" cy="351" r="4" fill={BLUE} /><T x={397.500} y={355} fill={GREY} w={32}>Female</T>
    <circle cx="438.500" cy="351" r="4" fill={NAVY} /><T x={444.500} y={355} fill={GREY} w={22}>Male</T>
    {[600, 400, 200, 0].map((v, i) => (
      <g key={v}>
        <path d={`M384 ${377.700 + i * 36.100}H616`} stroke="#6f8fb5" strokeDasharray="1 3" />
        <T x={377.500} y={381.200 + i * 36.100} a="end" fill={GREY}>{String(v)}</T>
      </g>
    ))}
    {ages.map(([l, x, t, m, hi, lo, sum]) => (
      <g key={l}>
        <rect x={x} y={t} width="32" height={m - t} fill={NAVY} />
        <rect x={x} y={m} width="32" height={486 - m} fill={BLUE} />
        <T x={x + 16} y={t - 6} a="middle" fill={GREY}>{sum}</T>
        {hi && <T x={x + 16} y={(t + m) / 2 + 3} a="middle" b={600}>{hi}</T>}
        {lo && <T x={x + 16} y={(m + 486) / 2 + 3} a="middle" b={600}>{lo}</T>}
        <T x={x + 16.500} y={504} a="middle" b={500} s={9}>{l}</T>
      </g>
    ))}
    <T x={418.500} y={517} a="middle" b={500} s={9}>25</T>
    <T x={469.500} y={529} din s={10.500} fill="#252423" w={63}>CF_age band</T>
    <T x={357} y={484} din s={10.500} rot fill="#252423" w={115}>Sum of Employee Cou...</T>
  </svg>
);

const fields: [string, number, number][] = [
  ['Life Sciences', 148.500, 50.500], ['Medical', 105, 31], ['Marketing', 58, 41.500], ['Technical D...', 53, 52.500], ['Other', 18, 23.500], ['Human Res...', 11.500, 52.500],
];
const FieldChart = () => (
  <svg width={277} height={155} viewBox="51 572 277 155">
    {[146, 229.500, 313].map(x => <path key={x} d={`M${x} 579V697`} stroke="#a8e6f2" strokeDasharray="1 4" />)}
    {fields.map(([l, w, tw], i) => (
      <g key={l}>
        <rect x="146" y={585.500 + i * 17.900} width={w} height="13.700" fill={BLUE} />
        <T x={138.500 - tw} y={595.700 + i * 17.900} s={9} w={tw} fill={GREY}>{l}</T>
      </g>
    ))}
    <T x={146} y={707.500} s={8.500} a="middle" fill="#3e5a5e">0</T>
    <T x={229.500} y={707.500} s={8.500} a="middle" fill="#3e5a5e">50</T>
    <T x={313} y={707.500} s={8.500} a="middle" fill="#3e5a5e">100</T>
    <T x={188.500} y={720} s={8} w={81.500} fill="#252423">Sum of Attrition count</T>
    <T x={66} y={666} s={8} rot w={56.500} fill="#252423">Education Field</T>
  </svg>
);

/* donut plots sit below each title, centred at C */
const C = { x: 69, y: 60 };
const Dn: React.FC<{ a: number; b: number; children?: React.ReactNode }> = ({ a, b, children }) => (
  <svg width={136} height={128}>
    <path d={ring(C.x, C.y, 39, 23.300, a, b)} fill={NAVY} />
    <path d={ring(C.x, C.y, 39, 23.300, b, a + 360)} fill={BLUE} />
    {children}
  </svg>
);

const roles: [string, string[], string][] = [
  ['Research Director', ['15', '16', '27', '22'], '80'],
  ['Research Scientist', ['54', '53', '90', '95'], '292'],
  ['Sales Executive', ['69', '54', '91', '112'], '326'],
  ['Sales Representative', ['12', '21', '27', '23'], '83'],
];
const BlankRow = ({ h }: { h: number }) => (
  <MRow $h={h}><RoleCell $kind="blank" />{[0, 1, 2, 3].map(i => <NumCell key={i} $kind="blank" />)}<SumCell /></MRow>
);
const kpis = [['Number of employees', '1470'], ['Inactive employees', '237'], ['Attrition rate', '16.12%'], ['Active employees', '1470'], ['Average Age', '37']];

export default function App() {
  return (
    <Window>
      <Global />
      <TitleBar>
        <QuickBar>
          <Ico w={15} h={15}><path d="M.5.500h14v14H3l-2.500-2zM3.500.500v6h8v-6M4.500 14.500v-5h6v5M7 10v3" /></Ico>
          <Ico w={60} h={16} c="none"><g transform="translate(16 0)"><path d="M1 1v6h6M1.500 6.500C4 3 6 1.500 9 1.500c5 0 6 5 3 8L6.500 15" stroke={W} strokeWidth="1.500" /></g><g transform="translate(45 0)"><path d="M14 1v6H8M13.500 6.500C11 3 9 1.500 6 1.500c-5 0-6 5-3 8L8.500 15" stroke="#5c5c5c" strokeWidth="1.500" /></g></Ico>
          <FileName>HR Data&nbsp;•&nbsp;Last saved: 10/29/2024 at 10:15 AM</FileName>
          <Ico w={9} h={6} c="#b8b8b8"><path d="M.8.500h7L4.300 5z" /></Ico>
        </QuickBar>
        <TopSearch><Lens /><span>Search</span></TopSearch>
        <WindowControls>
          <span>Sign in</span>
          <Avatar><Ico w={20} h={20} c="#b8b8b8" s={1.300}><circle cx="10" cy="5.500" r="3" /><path d="M5 10.500h10c0 4-2 6-5 6s-5-2-5-6z" /></Ico></Avatar>
          <Ico w={115} h={11} s={1.200}><path d="M10 5.500h10M54.500 3.500h7v7h-7zM57 3V1.500h7v7h-1.500M99 .5l10 10M109 .5l-10 10" /></Ico>
        </WindowControls>
      </TitleBar>
      <Menu>
        <MenuItem $w={54}>File</MenuItem>
        <MenuItem $w={61} $active><Underlined>Home</Underlined></MenuItem>
        <MenuItem $w={59}>Insert</MenuItem>
        <MenuItem $w={82}>Modeling</MenuItem>
        <MenuItem $w={53}>View</MenuItem>
        <MenuItem $w={80}>Optimize</MenuItem>
        <MenuItem $w={40}>Help</MenuItem>
        <ShareButton>
          <Ico w={16} h={15} c="#a9cdc6"><path d="M.5 4v10.500h12V11" /><path d="M10 1l5 4.500L10 10V7.500C7 7.500 5 8.500 3.500 11 4 6.500 6.500 4 10 3.800z" /></Ico>
          <span>Share</span>
          <Ico w={10} h={6} c="#a9cdc6"><path d="M.5.500L5 5 9.500.500" /></Ico>
        </ShareButton>
      </Menu>
      <Ribbon>
        <Group $w={161} $pad={6}>
          <Tool w={44} icon="paste" a="Paste" off />
          <ClipList>
            <ClipRow><Ico w={16} h={16} c="#777"><path d="M5 0l5 11M11 0L6 11" /><circle cx="5" cy="13" r="1.800" stroke="#2f5f86" strokeWidth="1.500" /><circle cx="11" cy="13" r="1.800" stroke="#2f5f86" strokeWidth="1.500" /></Ico>Cut</ClipRow>
            <ClipRow><Ico w={17} h={16} c="#777"><path d="M6 12.500H.5v-12h6M6.500 3.500h6l3 3v9h-9zM12.500 4v3h3M8.500 10.500h5M8.500 12.500h5" /></Ico>Copy</ClipRow>
            <ClipRow><Ico w={17} h={16} c="#8a8a8a"><path d="M15 1L9.500 6M6 5l5 5 3-4-4-3z" /><path d="M5 6L.8 9 7 15l3-4z" fill="#7d6233" stroke="#8c7040" /></Ico>Format painter</ClipRow>
          </ClipList>
          <GroupLabel>Clipboard</GroupLabel>
        </Group>
        <Group $w={370} $pad={6}>
          <Tool w={44} icon="get" a="Get" b="data" drop />
          <Tool w={53} icon="excel" a="Excel" b="workbook" />
          <Tool w={67} icon="onelake" a="OneLake" b="data hub" drop />
          <Tool w={36} icon="sql" a="SQL" b="Server" />
          <Tool w={44} icon="enter" a="Enter" b="data" />
          <Tool w={52} icon="dataverse" a="Dataverse" />
          <Tool w={60} icon="recent" a="Recent" b="sources" drop />
          <GroupLabel>Data</GroupLabel>
        </Group>
        <Group $w={117} $pad={8}>
          <Tool w={56} icon="transform" a="Transform" b="data" drop />
          <Tool w={44} icon="refresh" a="Refresh" />
          <GroupLabel>Queries</GroupLabel>
        </Group>
        <Group $w={147} $pad={8}>
          <Tool w={40} icon="newvis" a="New" b="visual" />
          <Tool w={40} icon="textbox" a="Text" b="box" />
          <Tool w={49} icon="more" a="More" b="visuals" drop />
          <GroupLabel>Insert</GroupLabel>
        </Group>
        <Group $w={188} $pad={9}>
          <Tool w={68} icon="newcalc" a="New visual" b="calculation" drop off />
          <Tool w={56} icon="newmeasure" a="New" b="measure" />
          <Tool w={42} icon="quick" a="Quick" b="measure" />
          <GroupLabel>Calculations</GroupLabel>
        </Group>
        <Group $w={74} $pad={9}>
          <Tool w={56} icon="sens" a="Sensitivity" drop off />
          <GroupLabel>Sensitivity</GroupLabel>
        </Group>
        <Group $w={59} $pad={7}>
          <Tool w={44} icon="publish" a="Publish" />
          <GroupLabel>Share</GroupLabel>
        </Group>
        <Group $w={60} $pad={8}>
          <Tool w={44} icon="copilot" a="Copilot" />
          <GroupLabel>Copilot</GroupLabel>
        </Group>
        <CollapseSlot><Ico w={10} h={7} s={1.800}><path d="M1 6l4-4 4 4" /></Ico></CollapseSlot>
      </Ribbon>

      <Body>
        <NavRail>
          <NavItem $active><Ico w={16} h={16} c="#fff" s={1.200}><path d="M2.500 1v12.500H16M4.500 13V7h2.500v6M8.500 13V9H11v4M12.500 13V4H15v9" /></Ico></NavItem>
          <NavItem><Ico w={18} h={16}><path d="M1.500.500h15v14h-15zM1.500 4.500h15M1.500 8h15M1.500 11.500h15M6.500 4v10.500M11.500 4v10.500" /></Ico></NavItem>
          <NavItem><Ico w={18} h={18}><path d="M.5 5.500h7v6h-7zM10.500.500h7v6h-7zM10.500 11.500h7v6h-7zM.5 7.500h7M10.500 2.500h7M10.500 13.500h7M4.500 5.500v-3h6M4.500 11.500v3h6" /></Ico></NavItem>
          <NavItem><Ico w={18} h={18}><path d="M3.500 10V1h5.500l4 4v9M9 1v4h4M14.500 5c2 2 2 7-1 10" /><text x="-1.500" y="16" fontSize="7" fontWeight="700" fill="#e8e8e8" stroke="none" fontFamily="Open Sans">DAX</text></Ico></NavItem>
        </NavRail>

        <Center>
          <Stage>
            <Report>
              <ReportTitle>HR EMPLOYEE DASHBOARD</ReportTitle>
              <Kpis>
                {kpis.map(([n, v]) => <Kpi key={n}><KpiName>{n}</KpiName><KpiValue>{v}</KpiValue></Kpi>)}
              </Kpis>
              <Lower>
                <LeftCol>
                  <Card $w={273}><CardHead>Overall Attrition By Department</CardHead><DepartmentPie /></Card>
                  <EduCard><EduTitle>Sum of Attrition count by Education Field</EduTitle><FieldChart /></EduCard>
                </LeftCol>
                <RightCol>
                  <TopRow>
                    <Card $w={289}><CardHead>Number Of Employees By Age</CardHead><AgeChart /></Card>
                    <MatrixPanel>
                      <CardHead $h={23}>Job Satisfaction</CardHead>
                      <MatrixBody>
                        <Matrix>
                          <MRow $h={25} $head>
                            <RoleCell $kind="head">Job Role</RoleCell>
                            {['1', '2', '3', '4'].map(n => <NumCell key={n} $kind="head">{n}</NumCell>)}
                            <SumCell $head>Total</SumCell>
                          </MRow>
                          <BlankRow h={10} />
                          {roles.map(([r, v, t]) => (
                            <React.Fragment key={r}>
                              <MRow $h={18.800}>
                                <RoleCell $kind="data">{r}</RoleCell>
                                {v.map((n, i) => <NumCell key={i} $kind="data">{n}</NumCell>)}
                                <SumCell>{t}</SumCell>
                              </MRow>
                              <BlankRow h={18.400} />
                            </React.Fragment>
                          ))}
                          <MRow $h={18.500}>
                            <RoleCell $kind="data"><b>Total</b></RoleCell>
                            {['289', '280', '442', '459'].map(n => <NumCell key={n} $kind="total">{n}</NumCell>)}
                            <SumCell>1470</SumCell>
                          </MRow>
                        </Matrix>
                        <Scroll><ScrollThumb /></Scroll>
                      </MatrixBody>
                    </MatrixPanel>
                  </TopRow>
                  <Banner>Attrition Rate By Each Group</Banner>
                  <Donuts>
                    <DonutFrame $backed>
                      <DonutCard $fill="#3f9fff">
                        <GhostTitle>Below 25</GhostTitle>
                        <DonutTitle>Below 25</DonutTitle>
                        <svg width={136} height={128}>
                          <circle cx={69} cy={60} r={41.500} fill="#1a80f6" />
                          <path d={ring(C.x, C.y, 38.500, 23.300, 200, 390)} fill={NAVY} />
                          <path d={ring(C.x, C.y, 41.500, 23.300, 30, 200)} fill={BLUE} />
                          <circle cx={69} cy={60} r={23.300} fill="#3f9fff" />
                          <T x={32} y={13} fill="#3f78b4" w={9.500}>20</T><T x={32} y={15.500} fill={GREY} w={9.500}>20</T>
                          <T x={7} y={25} w={34} fill="#3f78b4">(52.63%)</T><T x={7} y={27.500} w={35} fill={GREY}>(52.63%)</T>
                          <path d="M45 14h9l2 5M45 17h9l2 5M84 97l3 6h9" fill="none" stroke="#5a86b0" />
                          <T x={97} y={98.500} fill={GREY} w={9.500}>18</T><T x={99} y={102} fill="#3f78b4" w={9.500}>18</T>
                          <T x={97} y={111.500} w={29} fill={GREY}>(47.3...)</T><T x={99} y={115} w={35} fill="#3f78b4">(47.37%)</T>
                        </svg>
                      </DonutCard>
                    </DonutFrame>
                    <DonutFrame>
                      <DonutCard>
                        <DonutTitle>25 - 34</DonutTitle>
                        <Dn a={228} b={450}>
                          <path d="M43 18h10l2 5M49 103h9l1-6" fill="none" stroke="#5a86b0" />
                          <T x={31} y={17} fill={GREY} w={9.500}>69</T><T x={11} y={29} w={29} fill={GREY}>(61.6...)</T>
                          <T x={36} y={100} fill={GREY} w={9.500}>43</T><T x={11} y={112} w={35} fill={GREY}>(38.39%)</T>
                        </Dn>
                      </DonutCard>
                    </DonutFrame>
                    <DonutFrame $selected>
                      <DonutCard>
                        <DonutTitle>35 - 44</DonutTitle>
                        <Dn a={103.500} b={364.700}>
                          <path d="M89 25l2-5h9M76 97l2 6h8" fill="none" stroke="#5a86b0" />
                          <T x={103} y={20} fill={GREY} w={9.500}>14</T><T x={103} y={32} w={29} fill={GREY}>(27.4...)</T>
                          <T x={89} y={100} fill={GREY} w={9.500}>37</T><T x={89} y={113} w={36} fill={GREY}>(72.55%)</T>
                        </Dn>
                      </DonutCard>
                      <VisualTools>
                        <VisualTool><Funnel c="#666" /></VisualTool>
                        <VisualTool><Ico w={13} h={12} c="#777"><path d="M5 1.500H1.500v10h10V8M1.500 6.500h5v5M7.500.500h5v5M12.500.500L7 6" /></Ico></VisualTool>
                        <VisualTool><Dots c="#777" /></VisualTool>
                      </VisualTools>
                      <Tip>
                        <span>Gender</span><span>Male</span>
                        <span>CF_age band</span><span>35 - 44</span>
                        <span>Sum of Attrition count</span><span>37 (72.55%)</span>
                      </Tip>
                    </DonutFrame>
                    <DonutFrame>
                      <DonutCard>
                        <DonutTitle>45 - 5</DonutTitle>
                        <Dn a={100} b={330}>
                          <path d="M40 103h9" stroke="#5a86b0" />
                          <T x={15} y={109.500} w={23} fill={GREY}>(64%)</T>
                        </Dn>
                      </DonutCard>
                    </DonutFrame>
                    <DonutFrame>
                      <DonutCard>
                        <DonutTitle>Over 55</DonutTitle>
                        <Dn a={-30} b={32}>
                          <path d="M100 84l4 4h9M70 104h8" fill="none" stroke="#5a86b0" />
                          <T x={82} y={14} fill={GREY} w={5}>8</T><T x={82} y={26} w={35} fill={GREY}>(16.33%)</T>
                          <T x={116} y={85.500} fill={GREY} w={9.500}>18</T><T x={116} y={98} w={12} fill={GREY}>(...)</T>
                          <T x={11} y={104} w={17} fill={GREY}>(4...)</T><T x={82} y={103} fill={GREY} w={5}>3</T>
                          <T x={82} y={115} w={30} fill={GREY}>(6.12%)</T>
                        </Dn>
                      </DonutCard>
                    </DonutFrame>
                  </Donuts>
                </RightCol>
              </Lower>
            </Report>
            <Filters>
              <FiltersHead>
                <Funnel /><span>Filters</span>
                <Ico w={30} h={9} c="#666"><path d="M.5 4.500C3 0 7.500 0 10 4.500" /><circle cx="5.200" cy="4.500" r="1.800" fill="#666" /></Ico>
                <Chevrons c="#444" />
              </FiltersHead>
              <FilterSearch><Lens s={12} c="#555" flip />Search</FilterSearch>
              <Rule />
              <FilterLabel>Filters on this page<Dots c="#999" r={0.900} /></FilterLabel>
              <DropBox>Add data fields here</DropBox>
              <FilterLabel>Filters on all pages<Dots c="#999" r={0.900} /></FilterLabel>
              <DropBox>Add data fields here</DropBox>
            </Filters>
          </Stage>
          <TabBar>
            <DeviceBar>
              <Ico w={110} h={35} s={1.600}>
                <rect x="5" y="8" width="14" height="11.500" rx="2" stroke="#fff" /><path d="M7.500 22h9M12 19.500V22" stroke="#fff" />
                <rect x="0" y="28" width="24" height="3" rx="1" fill={TEAL} stroke="none" />
                <rect x="51.500" y="7" width="9" height="16.500" rx="1.500" stroke="#fff" /><path d="M54.500 20.500h3" stroke="#fff" strokeWidth="1" />
                <path d="M88.500 14.500v7l-4-3.500zM105.500 14.500v7l4-3.500z" stroke="#b8b8b8" strokeWidth="1" />
              </Ico>
            </DeviceBar>
            <PageTab>Page 1</PageTab>
            <AddTab><Ico w={11} h={11} c="#1d2a28" s={2.400}><path d="M5.500 0v11M0 5.500h11" /></Ico></AddTab>
          </TabBar>
        </Center>

        <Viz>
          <PaneHead $l={8} $r={10}>Visualizations<Chevrons /></PaneHead>
          <Strong>Build visual</Strong>
          <BuildTabs>
            <BuildTab $on><Ico w={24} h={26}><path d="M0 1.500h19" /><path d="M.5 6.500h23v7H.5zM.5 16.500h23v7H.5z" fill={TEAL} strokeDasharray="2 1.500" /></Ico></BuildTab>
            <BuildTab><Ico w={25} h={26}><path d="M12 24.500H1.500v-23h10l6 6V9" /><path d="M11.500 1.500v6h6z" fill="#fff" /><path d="M24.500 9.500L15 19M24.500 9.500l-7 11-2.500-2M15 18c-4 1-3 4-7 6 5 1 9 0 9.500-3.500" /></Ico></BuildTab>
          </BuildTabs>
          <VizGrid>{gallery.map((g, i) => <Ico key={i} w={18} h={18}>{g}</Ico>)}<Ico w={18} h={12} c="none"><path d="M4 7h2v2H4zM8.500 7h2v2h-2zM13 7h2v2h-2z" fill="#fff" /></Ico></VizGrid>
          <NameTip>Name<b>'HR data'[Education]</b></NameTip>
          <Wells>
            <WellLabel>Values</WellLabel>
            <Well $h={28}>Add data fields here</Well>
            <WellLabel $b>Drill through</WellLabel>
            <ToggleRow>Cross-report<Toggle>Off</Toggle></ToggleRow>
            <ToggleRow>Keep all filters<Toggle $on>On</Toggle></ToggleRow>
            <Well $h={26} $dark>Add drill-through fields here</Well>
          </Wells>
        </Viz>

        <DataPane>
          <PaneHead $l={8} $r={10}>Data<Chevrons /></PaneHead>
          <DataSearch><Lens s={14} c="#c0c0c0" flip /><span>ed</span><Ico w={12} h={12} c="#d0d0d0"><path d="M.5.500l11 11M11.500.500l-11 11" /></Ico></DataSearch>
          <TreeRow $pad={15}>
            <Ico w={32} h={12} c="#e8e8e8"><path d="M.5 4L4 7.500 7.500 4" strokeWidth="1.300" /><g transform="translate(14 0)"><rect x=".5" y=".5" width="11" height="11" rx="2" /><path d="M.5 4.500h11M.5 8h11M4.300.500v11M8 .5v11" /></g></Ico>HR data
          </TreeRow>
          <TreeRow $pad={44}><Check /><SigmaSlot /><Hit>Ed</Hit>ucation<RowMore><Dots c="#ccc" r={0.800} /></RowMore></TreeRow>
          <TreeRow $pad={44}><Check /><SigmaSlot /><Hit>Ed</Hit>ucation Field</TreeRow>
          <TreeRow $pad={44}><Check /><SigmaSlot><Ico w={11} h={12} c="#fff" s={1.200}><path d="M10 2.500V.600H.800L6 6 .8 11.400H10V9.500" /></Ico></SigmaSlot>Num Companie...</TreeRow>
        </DataPane>
      </Body>

      <StatusBar>
        <span>Page 1 of 1</span>
        <ZoomBox>
          <Ico w={121} h={12} s={1.200}><path d="M0 6h5M9 5.500h100M115 5.500h8M119 1.500v8M59.500 3v5" /><path d="M45 0h4v11h-4z" fill={W} stroke="none" /></Ico>
          <span>78%</span>
          <Ico w={15} h={11} s={1.200}><rect x=".6" y=".6" width="14" height="10" rx="1" /><path d="M5 3H3.500v5H5M10 3h1.500v5H10" /></Ico>
        </ZoomBox>
      </StatusBar>
      <Taskbar>
        <StartButton><Ico w={16} h={16} c="none"><path d="M0 2.300L6.600 1.400V7.600H0zM7.400 1.300L16 0V7.600H7.400zM0 8.400H6.600V14.600L0 13.700zM7.400 8.400H16V16L7.400 14.700z" fill="#fff" /></Ico></StartButton>
        <TaskSearch>
          <Lens s={17} c="#e0e0e0" /><span>Type here to search</span>
          <Ico w={62} h={38} c="none">
            <path d="M14 38C7 30 7 22 12 12 14 4 19 1 26 1s13 4 15 12c5 10 5 17-1 25z" fill="#17628c" />
            <path d="M10 20h7M9 25h9M10 30h9M13 35h7M36 20h7M36 25h8M35 30h8M34 35h6M14 13l3-4M39 13l-3-4M17 5l4 4M35 5l-4 4M26.500 1v8M21 2l2 7M32 2l-2 7" stroke="#e9c25c" strokeWidth="2" />
            <path d="M17 12c5-3 14-3 19 0 1 9-2 18-9.500 18S16 21 17 12z" fill="#dca85c" />
            <path d="M20 18h4M29 18h4" stroke="#1d3a4a" strokeWidth="2" /><path d="M24 25h5" stroke="#8a4a2a" />
            <path d="M24 29h5v9h-5z" fill="#c98a3a" /><path d="M26.500 2v6" stroke="#c43a2a" strokeWidth="1.500" />
            <path d="M1 38V20l13 17" stroke="#c99045" strokeWidth="2.500" />
            <path d="M38 37L54 24c6-5 6-10 1-10-3 0-6 2-5 5" stroke="#d8b55c" strokeWidth="3" /><path d="M38 37L54 24c6-5 6-10 1-10-3 0-6 2-5 5" stroke="#1b6a94" strokeWidth="3" strokeDasharray="3 4" />
          </Ico>
        </TaskSearch>
        <TaskItem><Ico w={22} h={17} s={1.300}><path d="M.5 0v2.500h9V0M.5 6h9v6h-9zM.5 17v-2.500h9V17M14.500 0v3.500M14.500 12v5M13 6h3v3h-3z" /></Ico></TaskItem>
        <TaskItem $run><Ico w={22} h={20} c="none"><path d="M0 1h8l2 2h12v16H0z" fill="#ffd35c" /><path d="M0 1h8l1.500 2L8 4H0z" fill="#e0a010" /><path d="M4 19v-6c0-1 1-2 2-2h10c1 0 2 1 2 2v6h-4v-4H8v4z" fill="#3a8ee0" /></Ico></TaskItem>
        <TaskItem><Ico w={24} h={22} c="none"><path d="M0 8L12 0l12 8z" fill="#0f5ca8" /><path d="M2 7h20v8H2z" fill="#e8eef4" /><path d="M0 8l12 8L24 8v14H0z" fill="#2da4ec" /><path d="M0 22L24 8v14z" fill="#50c4f8" /></Ico></TaskItem>
        <TaskItem><Ico w={23} h={24} c="none"><path d="M7 7V2.500C7 1.500 7.500 1 8.500 1h6c1 0 1.500.5 1.500 1.500V7" stroke="#2ca8e8" strokeWidth="2" /><path d="M0 5h23v15c0 2-1 3-3 3H3c-2 0-3-1-3-3z" fill="#f2f2f2" /><path d="M6.500 9h4.500v4.500H6.500z" fill="#f25022" /><path d="M12 9h4.500v4.500H12z" fill="#7fba00" /><path d="M6.500 14.500h4.500V19H6.500z" fill="#00a4ef" /><path d="M12 14.500h4.500V19H12z" fill="#ffb900" /></Ico></TaskItem>
        <TaskItem><Ico w={24} h={24} c="none"><rect x="2" y="1" width="20" height="17" rx="1.500" fill="#f8bd90" /><path d="M7 7c1-1.500 2-1.500 3 0M14 7c1-1.500 2-1.500 3 0M8 10c1 3.500 7 3.500 8 0" stroke="#4a2c5a" strokeWidth="1.500" /><path d="M0 11l12 7 12-7v13H0z" fill="#7b7be8" /><path d="M12 18l12-7v13z" fill="#5050b8" /></Ico></TaskItem>
        <TaskItem><Ico w={24} h={24} c="none">
          <defs><linearGradient id="ea" x1="0" y1="0" x2="1" y2=".5"><stop offset="0" stopColor="#1f9be0" /><stop offset=".55" stopColor="#3cc8c0" /><stop offset="1" stopColor="#6ae04e" /></linearGradient></defs>
          <circle cx="12" cy="12" r="12" fill="#137ad0" /><path d="M.3 10C2-3 22-4 24 10c.5 4-2 7-7 7-3 0-4-1.500-2.500-3C17 10 13 7 9 7 5 7 2 8 .3 10z" fill="url(#ea)" /><path d="M8 12c-2 6 3 11 9 10-7 4-15 0-16-7 0-5 5-7 8-7 3 0 5 1.500 6 3-3-1-6-1-7 1z" fill="#0f57a8" /><path d="M14.500 14c2-3-.5-6-3-6-2 2-3 4-2.500 7 1 4 5 6 9 5 2 0 3.500-1.500 4.500-3-6 2.500-10-.5-8-3z" fill="#1f303e" fillOpacity=".55" />
        </Ico></TaskItem>
        <TaskItem><Ico w={14} h={24} c="none"><path d="M0 0h5v24l-5 .5zM9 0h5v24.500L9 24z" fill="#b1060f" /><path d="M0 0h5l9 24.500L9 24z" fill="#e50914" /></Ico></TaskItem>
        <TaskItem $run><Ico w={24} h={24} c="none"><path d="M12 24C4 24 0 18 0 13 0 9 1 6 3 4l1 3c1-2 3-3 4-3 0 2 1 3 3 3 1-3 3-5 5-7 0 3 2 4 4 7s4 5 4 8c0 6-5 9-12 9z" fill="#ff7a1f" /><path d="M16 0c0 3 2 4 4 7s4 5 4 8c0 4-3 7-6 8 3-5 2-10-2-13-2-2-3-3-3-5 1-2 2-4 3-5z" fill="#ffd43a" /><circle cx="12" cy="13.500" r="5.500" fill="#7a3ae0" /><path d="M0 13c0 6 4 11 12 11 4 0 8-2 10-5-4 3-9 3-13 0-3-2-4-4-4-7-2-1-4-1-5 1z" fill="#ff3f5a" /><path d="M2 10c3-2 6-1 9 1 1 1-1 2-3 2.500-3 .5-5-1-6-3.500z" fill="#ff8a2a" /></Ico></TaskItem>
        <TaskItem $run $active><Ico w={20} h={24} c="none"><path d="M10 0h10v24H10z" fill="#d89a10" /><path d="M5 6h9v18H5z" fill="#f0c030" /><path d="M0 12h9v12H0z" fill="#f8de6c" /></Ico></TaskItem>
        <TaskItem $run><Ico w={24} h={24} c="none"><rect width="24" height="24" fill="#0061ff" /><path d="M8.300 6L12 8.400 8.300 10.800 4.600 8.400zM15.700 6l3.700 2.400-3.700 2.400L12 8.400zM8.300 10.800L12 13.200 8.300 15.600 4.600 13.200zM15.700 10.800l3.700 2.400-3.700 2.400L12 13.200zM12 14.200l3.600 2.300L12 18.800l-3.600-2.300z" fill="#fff" /></Ico></TaskItem>
        <Tray>
          <Weather>
            <Ico w={24} h={24} c="none"><path d="M3 17c6 2 12-2 13-9 8 3 7 15-2 15-5 0-9-2-11-6z" fill="#f59a1f" /><path d="M2 9a4 4 0 014-6c2-4 8-2 7 2 2 1 1 4-1 4z" fill="#b8d0f4" /><path d="M12 21a3 3 0 012-5c2-4 7-2 7 1 3 0 3 4 1 4z" fill="#c4d8f8" /><circle cx="18" cy="6" r="6" fill="#c42b1c" /><text x="15.800" y="9.500" fontSize="9.500" fill="#fff" fontFamily="Open Sans">1</text></Ico>
            <span>28°C&nbsp;&nbsp; Partly cloudy</span>
          </Weather>
          <Ico w={136} h={20} c="#f0f0f0" s={1.300}>
            <path d="M.5 13L6 7.500 11.500 13" />
            <path d="M34 14.500H23.500v-8H37.500V9" /><path d="M26 8.500v4" strokeWidth="2" /><circle cx="34.500" cy="13.500" r="4.300" fill="#12851f" stroke="none" /><path d="M34.500 11v5" stroke="#e0ffe0" strokeWidth="2" />
            <path d="M50 15a3 3 0 010-6c1-5 7-5 8-1 4 0 5 7 1 7z" fill="#8a94a4" stroke="none" /><path d="M47 4l14 12" />
            <rect x="72.500" y="6" width="7" height="8" rx="1.500" /><path d="M80 9l3-2v6l-3-2M72 3c3-2 6-2 9 0M72 17c3 2 6 2 9 0" />
            <path d="M97.500 17C98 10 102 6 109 5M101.500 17c0-5 3-8 7.500-8M105 17c0-2 1.500-4 4-4" /><circle cx="108" cy="16" r="1.200" fill="#fff" stroke="none" />
            <path d="M119 8h3l4-3.500v11L122 12h-3zM128.500 8c1 1.500 1 3 0 4.500M131 6c2 3 2 6 0 8.500M133.500 4c3 4 3 8.500 0 12.500" />
          </Ico>
          <Clock>10:15 PM<br />11/4/2024</Clock>
          <TrayEnd>
            <Ico w={25} h={24} c="none"><path d="M0 1h16v13H5l-3 3v-3H0z" fill="#fff" /><path d="M3 4.500h10M3 7.500h10M3 10.500h7" stroke="#1b2540" strokeWidth="1.300" /><circle cx="16" cy="16.500" r="8" fill="#30353c" stroke="#8a9098" /><text x="12.800" y="20.800" fontSize="12" fontWeight="600" fill="#fff" fontFamily="Open Sans">4</text></Ico>
          </TrayEnd>
        </Tray>
      </Taskbar>
    </Window>
  );
}
